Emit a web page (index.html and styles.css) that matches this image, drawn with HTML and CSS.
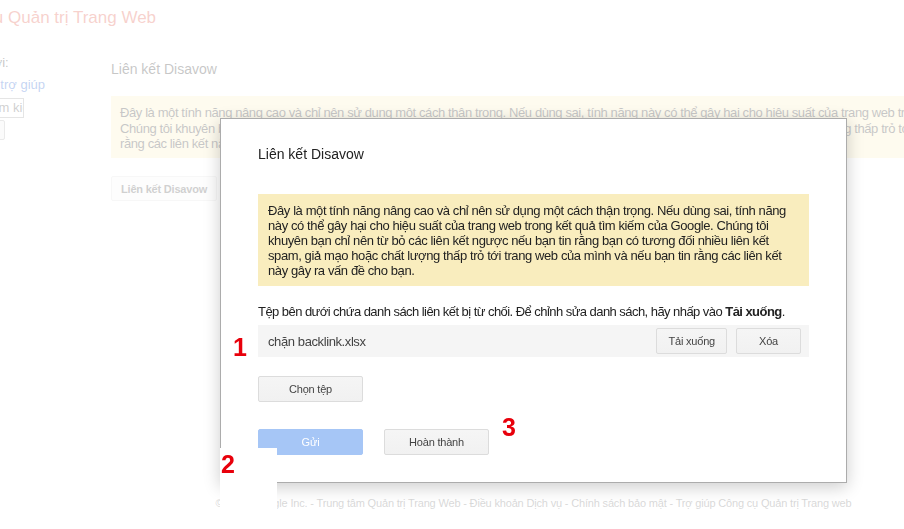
FILE: index.html
```html
<!DOCTYPE html>
<html lang="vi">
<head>
    <meta charset="UTF-8">
    <meta name="viewport" content="width=device-width, initial-scale=1.0">
    <title>Liên kết Disavow</title>
    <link rel="stylesheet" href="styles.css">
</head>
<body>
    <div class="page">
        <div class="site-title">Công cụ Quản trị Trang Web</div>

        <div class="layout">
            <div class="sidebar">
                <div class="side-label">Điều gì mới:</div>
                <a class="side-link" href="#">Trung tâm trợ giúp</a>
                <div class="side-search">Tìm kiếm</div>
                <div class="side-button"></div>
            </div>

            <div class="content">
                <h2 class="page-heading">Liên kết Disavow</h2>
                <div class="page-warning">
                    Đây là một tính năng nâng cao và chỉ nên sử dụng một cách thận trọng. Nếu dùng sai, tính năng này có thể gây hại cho hiệu suất của trang web trong kết quả tìm kiếm của Google.<br>
                    Chúng tôi khuyên bạn chỉ nên từ bỏ các liên kết ngược nếu bạn tin rằng bạn có tương đối nhiều liên kết spam, giả mạo hoặc chất lượng thấp trỏ tới trang web của mình và nếu bạn tin<br>
                    rằng các liên kết này gây ra vấn đề cho bạn.
                </div>
                <button class="page-button">Liên kết Disavow</button>

                <div class="footer">
                    © 2013 Google Inc. - Trung tâm Quản trị Trang Web - Điều khoản Dịch vụ - Chính sách bảo mật - Trợ giúp Công cụ Quản trị Trang web
                </div>
            </div>
        </div>
    </div>

    <!-- modal backdrop -->
    <div class="backdrop"></div>

    <div class="dialog">
        <div class="dialog-title">Liên kết Disavow</div>

        <div class="warning">
            Đây là một tính năng nâng cao và chỉ nên sử dụng một cách thận trọng. Nếu dùng sai, tính năng<br>
            này có thể gây hại cho hiệu suất của trang web trong kết quả tìm kiếm của Google. Chúng tôi<br>
            khuyên bạn chỉ nên từ bỏ các liên kết ngược nếu bạn tin rằng bạn có tương đối nhiều liên kết<br>
            spam, giả mạo hoặc chất lượng thấp trỏ tới trang web của mình và nếu bạn tin rằng các liên kết<br>
            này gây ra vấn đề cho bạn.
        </div>

        <p class="file-note">Tệp bên dưới chứa danh sách liên kết bị từ chối. Để chỉnh sửa danh sách, hãy nhấp vào <b>Tải xuống</b>.</p>

        <div class="file-row">
            <span class="file-name">chặn backlink.xlsx</span>
            <button class="btn">Tải xuống</button>
            <button class="btn btn-small">Xóa</button>
        </div>

        <button class="btn btn-wide choose-file">Chọn tệp</button>

        <div class="actions">
            <button class="btn btn-wide btn-blue" disabled>Gửi</button>
            <button class="btn btn-wide">Hoàn thành</button>
        </div>
    </div>

    <!-- screenshot annotations -->
    <div class="mask"></div>
    <span class="mark mark-1">1</span>
    <span class="mark mark-2">2</span>
    <span class="mark mark-3">3</span>
</body>
</html>
```

FILE: styles.css
```css
/* Webmaster Tools - disavow dialog */
body {
    margin: 0;
    font-family: "Liberation Sans", Arial, sans-serif;
    color: #222;
    background: #fff;
    overflow: hidden;
    height: 529px;
}

/* page is scrolled a bit to the right */
.page {
    margin-left: -70px;
}

.site-title {
    height: 45px;
    padding: 8px 0 0 10px;
    box-sizing: border-box;
    font-size: 17px;
    line-height: 20px;
    color: #dd4b39;
}

.layout {
    display: flex;
}

.sidebar {
    width: 181px;
    flex-shrink: 0;
    box-sizing: border-box;
    padding: 10px 0 0 8px;
    display: flex;
    flex-direction: column;
    align-items: flex-start;
    font-size: 13px;
    line-height: 16px;
}

.side-link {
    color: #15c;
    text-decoration: none;
    margin-top: 6px;
}

.side-search {
    margin-top: 5px;
    width: 86px;
    height: 20px;
    box-sizing: border-box;
    border: 1px solid #999;
    padding: 1px 0 0 48px;
    white-space: nowrap;
    overflow: hidden;
    color: #444;
}

.side-button {
    margin-top: 2px;
    width: 67px;
    height: 20px;
    box-sizing: border-box;
    border: 1px solid #aaa;
    border-radius: 2px;
    background: #eee;
}

.content {
    width: 845px;
    flex-shrink: 0;
}

.page-heading {
    margin: 15px 0 0;
    font-size: 14px;
    line-height: 18px;
    font-weight: normal;
    color: #222;
}

.page-warning {
    margin-top: 18px;
    width: 1000px;
    height: 62px;
    box-sizing: border-box;
    padding: 9px 9px 0;
    background: #f9edbe;
    font-size: 13px;
    line-height: 15.5px;
    letter-spacing: -0.4px;
    white-space: nowrap;
    overflow: hidden;
}

.page-button {
    display: block;
    margin-top: 18px;
    height: 25px;
    padding: 0 9px;
    font-family: inherit;
    font-size: 11px;
    font-weight: bold;
    letter-spacing: -0.2px;
    color: #444;
    background: #f5f5f5;
    border: 1px solid #ddd;
    border-radius: 2px;
}

.footer {
    margin-top: 295px;
    text-align: center;
    font-size: 11px;
    line-height: 14px;
    letter-spacing: -0.17px;
    color: #666;
    white-space: nowrap;
}

.backdrop {
    position: fixed;
    inset: 0;
    background: rgba(255, 255, 255, 0.75);
}

.dialog {
    position: absolute;
    left: 220px;
    top: 118px;
    width: 627px;
    box-sizing: border-box;
    padding: 27px 37px 27px;
    background: #fff;
    border: 1px solid #acacac;
    box-shadow: 0px 4px 16px rgba(0, 0, 0, 0.2);
    font-size: 13px;
    letter-spacing: -0.4px;
    color: #222;
}

.dialog-title {
    font-size: 14px;
    line-height: 17px;
    letter-spacing: 0;
    margin-bottom: 31px;
}

.warning {
    background: #f9edbe;
    padding: 9px 10px 8px;
    line-height: 15px;
    white-space: nowrap;
}

.file-note {
    margin: 18px 0 0;
    line-height: 16px;
    letter-spacing: -0.55px;
    white-space: nowrap;
}

.file-row {
    margin-top: 5px;
    height: 32px;
    box-sizing: border-box;
    padding: 3px 8px 3px 10px;
    display: flex;
    align-items: center;
    gap: 9px;
    background: #f5f5f5;
    color: #444;
}

.file-name {
    flex: 1;
}

.btn {
    height: 26px;
    padding: 0 11px;
    font-family: inherit;
    font-size: 11px;
    letter-spacing: -0.2px;
    color: #444;
    background: linear-gradient(#f5f5f5, #f1f1f1);
    border: 1px solid #dcdcdc;
    border-radius: 2px;
}

.btn-small {
    min-width: 65px;
}

.btn-wide {
    min-width: 105px;
}

.choose-file {
    display: block;
    margin-top: 19px;
}

.actions {
    margin-top: 27px;
    display: flex;
    gap: 21px;
}

.btn-blue {
    color: #fff;
    background: #a6c6f6;
    border-color: #a6c6f6;
}

.mask {
    position: absolute;
    left: 220px;
    top: 448px;
    width: 57px;
    height: 61px;
    background: #fff;
}

.mark {
    position: absolute;
    font-size: 25px;
    line-height: 25px;
    font-weight: bold;
    color: #e8000b;
}

.mark-1 { left: 233px; top: 335px; }
.mark-2 { left: 221px; top: 452px; }
.mark-3 { left: 502px; top: 415px; }
```
